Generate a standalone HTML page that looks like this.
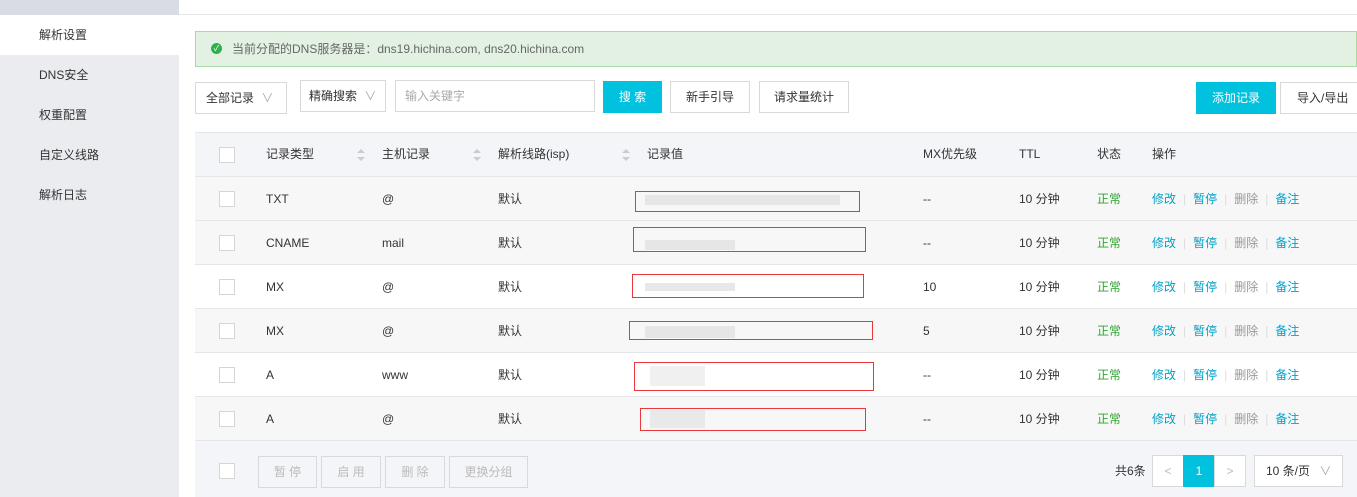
<!DOCTYPE html><html><head><meta charset="utf-8"><style>
*{box-sizing:border-box;margin:0;padding:0}
body{width:1357px;height:497px;overflow:hidden;background:#fff;font-family:"Liberation Sans","Noto Sans CJK SC",sans-serif;font-size:12px;color:#333;position:relative}
.a{position:absolute}
.side{left:0;top:0;width:179px;height:497px;background:#eaecf0}
.si{left:0;width:179px;height:40px;line-height:40px;padding-left:39px;font-size:12px;color:#333}
.btn{position:absolute;border:1px solid #d9d9d9;background:#fff;text-align:center;font-size:12px;color:#333}
.cy{background:#00c1de;border-color:#00c1de;color:#fff}
.cb{position:absolute;left:219px;width:16px;height:16px;border:1px solid #d5d5d5;background:#fff}
.row{position:absolute;left:195px;width:1162px;height:44px;border-bottom:1px solid #e3e6eb}
.row span{position:absolute;top:0;line-height:44px}
.rb{position:absolute;border:1px solid #e8383d}
.ops{color:#00a2ca}
.sep{color:#ddd;margin:0 7px;font-style:normal}
</style></head><body>
<div class="a side"></div>
<div class="a" style="left:0;top:0;width:179px;height:15px;background:#d9dce3"></div>
<div class="a" style="left:179px;top:14px;width:1178px;height:1px;background:#e3e6eb"></div>
<div class="a si" style="top:15px;background:#fff">解析设置</div>
<div class="a si" style="top:55px">DNS安全</div>
<div class="a si" style="top:95px">权重配置</div>
<div class="a si" style="top:135px">自定义线路</div>
<div class="a si" style="top:175px">解析日志</div>

<div class="a" style="left:195px;top:31px;width:1162px;height:36px;background:#e3f1e3;border:1px solid #a9d9a9;line-height:34px;padding-left:36px;color:#666">当前分配的DNS服务器是：dns19.hichina.com, dns20.hichina.com</div>
<div class="a" style="left:211px;top:43px;width:11px;height:11px;border-radius:50%;background:#2bb24c;color:#fff;font-size:8px;line-height:11px;text-align:center">✓</div>

<div class="btn" style="left:195px;top:82px;width:92px;height:32px;line-height:30px;text-align:left;padding-left:10px">全部记录 <span style="color:#aaa;margin-left:4px">∨</span></div>
<div class="btn" style="left:300px;top:80px;width:86px;height:32px;line-height:30px;text-align:left;padding-left:8px">精确搜索 <span style="color:#aaa;margin-left:4px">∨</span></div>
<div class="btn" style="left:395px;top:80px;width:200px;height:32px;line-height:30px;text-align:left;padding-left:9px;color:#aaa">输入关键字</div>
<div class="btn cy" style="left:603px;top:81px;width:59px;height:32px;line-height:30px">搜 索</div>
<div class="btn" style="left:670px;top:81px;width:80px;height:32px;line-height:30px">新手引导</div>
<div class="btn" style="left:759px;top:81px;width:90px;height:32px;line-height:30px">请求量统计</div>
<div class="btn cy" style="left:1196px;top:82px;width:80px;height:32px;line-height:30px">添加记录</div>
<div class="btn" style="left:1280px;top:82px;width:80px;height:32px;line-height:30px;text-align:left;padding-left:16px">导入/导出</div>

<div class="a" style="left:195px;top:132px;width:1162px;height:45px;background:#f4f5f9;border-top:1px solid #e3e6eb;border-bottom:1px solid #e3e6eb"></div>
<div class="cb" style="top:147px"></div>
<div class="a" style="top:132px;left:266px;line-height:45px">记录类型</div>
<div class="a" style="top:132px;left:382px;line-height:45px">主机记录</div>
<div class="a" style="top:132px;left:498px;line-height:45px">解析线路(isp)</div>
<div class="a" style="top:132px;left:647px;line-height:45px">记录值</div>
<div class="a" style="top:132px;left:923px;line-height:45px">MX优先级</div>
<div class="a" style="top:132px;left:1019px;line-height:45px">TTL</div>
<div class="a" style="top:132px;left:1097px;line-height:45px">状态</div>
<div class="a" style="top:132px;left:1152px;line-height:45px">操作</div>
<svg class="a" style="left:356px;top:148px" width="10" height="14"><path d="M1 5L5 1L9 5Z M1 9L5 13L9 9Z" fill="#c8ccd4"/></svg>
<svg class="a" style="left:472px;top:148px" width="10" height="14"><path d="M1 5L5 1L9 5Z M1 9L5 13L9 9Z" fill="#c8ccd4"/></svg>
<svg class="a" style="left:621px;top:148px" width="10" height="14"><path d="M1 5L5 1L9 5Z M1 9L5 13L9 9Z" fill="#c8ccd4"/></svg>

<div class="row" style="top:177px;background:#f7f7f7"><span style="left:71px">TXT</span><span style="left:187px">@</span><span style="left:303px">默认</span><span style="left:728px">--</span><span style="left:824px">10 分钟</span><span style="left:902px;color:#2fa52f">正常</span><span class="ops" style="left:957px">修改<i class="sep">|</i>暂停<i class="sep">|</i><b style="font-weight:normal;color:#999">删除</b><i class="sep">|</i>备注</span></div>
<div class="row" style="top:221px;background:#f7f7f7"><span style="left:71px">CNAME</span><span style="left:187px">mail</span><span style="left:303px">默认</span><span style="left:728px">--</span><span style="left:824px">10 分钟</span><span style="left:902px;color:#2fa52f">正常</span><span class="ops" style="left:957px">修改<i class="sep">|</i>暂停<i class="sep">|</i><b style="font-weight:normal;color:#999">删除</b><i class="sep">|</i>备注</span></div>
<div class="row" style="top:265px;background:#fff"><span style="left:71px">MX</span><span style="left:187px">@</span><span style="left:303px">默认</span><span style="left:728px">10</span><span style="left:824px">10 分钟</span><span style="left:902px;color:#2fa52f">正常</span><span class="ops" style="left:957px">修改<i class="sep">|</i>暂停<i class="sep">|</i><b style="font-weight:normal;color:#999">删除</b><i class="sep">|</i>备注</span></div>
<div class="row" style="top:309px;background:#f7f7f7"><span style="left:71px">MX</span><span style="left:187px">@</span><span style="left:303px">默认</span><span style="left:728px">5</span><span style="left:824px">10 分钟</span><span style="left:902px;color:#2fa52f">正常</span><span class="ops" style="left:957px">修改<i class="sep">|</i>暂停<i class="sep">|</i><b style="font-weight:normal;color:#999">删除</b><i class="sep">|</i>备注</span></div>
<div class="row" style="top:353px;background:#fff"><span style="left:71px">A</span><span style="left:187px">www</span><span style="left:303px">默认</span><span style="left:728px">--</span><span style="left:824px">10 分钟</span><span style="left:902px;color:#2fa52f">正常</span><span class="ops" style="left:957px">修改<i class="sep">|</i>暂停<i class="sep">|</i><b style="font-weight:normal;color:#999">删除</b><i class="sep">|</i>备注</span></div>
<div class="row" style="top:397px;background:#f7f7f7"><span style="left:71px">A</span><span style="left:187px">@</span><span style="left:303px">默认</span><span style="left:728px">--</span><span style="left:824px">10 分钟</span><span style="left:902px;color:#2fa52f">正常</span><span class="ops" style="left:957px">修改<i class="sep">|</i>暂停<i class="sep">|</i><b style="font-weight:normal;color:#999">删除</b><i class="sep">|</i>备注</span></div>
<div class="cb" style="top:191px"></div><div class="cb" style="top:235px"></div><div class="cb" style="top:279px"></div><div class="cb" style="top:323px"></div><div class="cb" style="top:367px"></div><div class="cb" style="top:411px"></div>

<div class="a" style="left:645px;top:195px;width:195px;height:10px;background:#e6e6e6"></div>
<div class="a" style="left:645px;top:240px;width:90px;height:10px;background:#e6e6e6"></div>
<div class="a" style="left:645px;top:283px;width:90px;height:8px;background:#e8e8e8"></div>
<div class="a" style="left:645px;top:326px;width:90px;height:12px;background:#e6e6e6"></div>
<div class="a" style="left:650px;top:366px;width:55px;height:20px;background:#f0f0f0"></div>
<div class="a" style="left:650px;top:410px;width:55px;height:18px;background:#e9e9e9"></div>
<div class="rb" style="left:635px;top:191px;width:225px;height:21px"></div>
<div class="rb" style="left:633px;top:227px;width:233px;height:25px"></div>
<div class="rb" style="left:632px;top:274px;width:232px;height:24px"></div>
<div class="rb" style="left:629px;top:321px;width:244px;height:19px"></div>
<div class="rb" style="left:634px;top:362px;width:240px;height:29px"></div>
<div class="rb" style="left:640px;top:408px;width:226px;height:23px"></div>

<div class="a" style="left:195px;top:441px;width:1162px;height:56px;background:#f4f5f9"></div>
<div class="cb" style="top:463px"></div>
<div class="btn" style="left:258px;top:456px;width:59px;height:32px;line-height:30px;color:#bbb;background:#f4f5f9">暂 停</div>
<div class="btn" style="left:321px;top:456px;width:60px;height:32px;line-height:30px;color:#bbb;background:#f4f5f9">启 用</div>
<div class="btn" style="left:385px;top:456px;width:60px;height:32px;line-height:30px;color:#bbb;background:#f4f5f9">删 除</div>
<div class="btn" style="left:449px;top:456px;width:79px;height:32px;line-height:30px;color:#bbb;background:#f4f5f9">更换分组</div>
<div class="a" style="left:1115px;top:456px;line-height:30px">共6条</div>
<div class="btn" style="left:1152px;top:455px;width:32px;height:32px;line-height:30px;color:#bbb">&lt;</div>
<div class="btn cy" style="left:1183px;top:455px;width:32px;height:32px;line-height:30px">1</div>
<div class="btn" style="left:1214px;top:455px;width:32px;height:32px;line-height:30px;color:#bbb">&gt;</div>
<div class="btn" style="left:1254px;top:455px;width:89px;height:32px;line-height:30px;text-align:left;padding-left:11px">10 条/页 <span style="color:#aaa;margin-left:6px">∨</span></div>
</body></html>
